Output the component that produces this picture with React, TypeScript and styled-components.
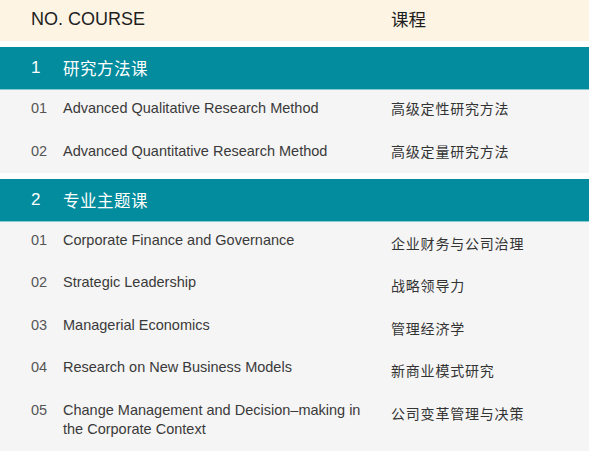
import React from "react";
import styled, { createGlobalStyle } from "styled-components";

const Global = createGlobalStyle`
  html, body { margin: 0; padding: 0; background: #ffffff; }
  body { font-family: "Liberation Sans", Arial, "Noto Sans CJK SC", sans-serif; }
`;

const Page = styled.div`
  width: 589px;
  display: flex;
  flex-direction: column;
`;

const Grid = styled.div`
  display: grid;
  grid-template-columns: 32px 322px 1fr;
  padding-left: 31px;
  padding-right: 20px;
`;

const Header = styled(Grid)`
  height: 41px;
  align-items: center;
  background: #fdf4e4;
  color: #1e1e1e;
  font-size: 18px;
  line-height: 22px;
  padding-bottom: 4px;
  box-sizing: border-box;
`;

const HeadLabel = styled.span`
  grid-column: 1 / span 2;
  font-family: "Liberation Sans", Arial, sans-serif;
`;

const HeadZh = styled.span`
  font-family: "Noto Sans CJK SC", sans-serif;
  font-size: 17.5px;
  margin-left: 6px;
`;

const Section = styled.section`
  margin-top: 6px;
  display: flex;
  flex-direction: column;
`;

const SectionBar = styled.div`
  height: 42px;
  display: flex;
  align-items: center;
  padding-left: 31px;
  background: #038c9d;
  border-bottom: 1px solid #86c9d1;
  color: #ffffff;
  font-size: 17px;
`;

const BarNum = styled.span`
  width: 32px;
  font-family: "Liberation Sans", Arial, sans-serif;
`;

const BarTitle = styled.span`
  font-family: "Noto Sans CJK SC", sans-serif;
  font-size: 16.5px;
  letter-spacing: 0.5px;
`;

const Rows = styled.div`
  background: #f5f5f5;
  display: flex;
  flex-direction: column;
`;

const Row = styled(Grid)`
  padding-top: 9px;
  padding-bottom: 14.5px;
  line-height: 19px;
  &:last-child { padding-bottom: 12px; }
`;

const Num = styled.span`
  color: #555555;
  font-size: 14.5px;
`;

const Course = styled.span`
  color: #3a3a3a;
  font-size: 14.5px;
  padding-right: 8px;
`;

const Zh = styled.span<{ $shift?: number }>`
  color: #333333;
  font-family: "Noto Sans CJK SC", sans-serif;
  font-size: 14px;
  line-height: 19px;
  letter-spacing: 0.8px;
  margin-top: ${(p) => p.$shift ?? 0}px;
  margin-bottom: ${(p) => -(p.$shift ?? 0)}px;
  margin-left: 6px;
`;

type Item = { no: string; en: string; zh: string };
type Group = { no: string; title: string; shift: number; items: Item[] };

const groups: Group[] = [
  {
    no: "1",
    title: "研究方法课",
    shift: 0,
    items: [
      { no: "01", en: "Advanced Qualitative Research Method", zh: "高级定性研究方法" },
      { no: "02", en: "Advanced Quantitative Research Method", zh: "高级定量研究方法" },
    ],
  },
  {
    no: "2",
    title: "专业主题课",
    shift: 3,
    items: [
      { no: "01", en: "Corporate Finance and Governance", zh: "企业财务与公司治理" },
      { no: "02", en: "Strategic Leadership", zh: "战略领导力" },
      { no: "03", en: "Managerial Economics", zh: "管理经济学" },
      { no: "04", en: "Research on New Business Models", zh: "新商业模式研究" },
      {
        no: "05",
        en: "Change Management and Decision–making in the Corporate Context",
        zh: "公司变革管理与决策",
      },
    ],
  },
];

export default function App() {
  return (
    <Page>
      <Global />
      <Header>
        <HeadLabel>NO. COURSE</HeadLabel>
        <HeadZh>课程</HeadZh>
      </Header>
      {groups.map((g) => (
        <Section key={g.no}>
          <SectionBar>
            <BarNum>{g.no}</BarNum>
            <BarTitle>{g.title}</BarTitle>
          </SectionBar>
          <Rows>
            {g.items.map((it) => (
              <Row key={it.no}>
                <Num>{it.no}</Num>
                <Course>{it.en}</Course>
                <Zh $shift={g.shift}>{it.zh}</Zh>
              </Row>
            ))}
          </Rows>
        </Section>
      ))}
    </Page>
  );
}
